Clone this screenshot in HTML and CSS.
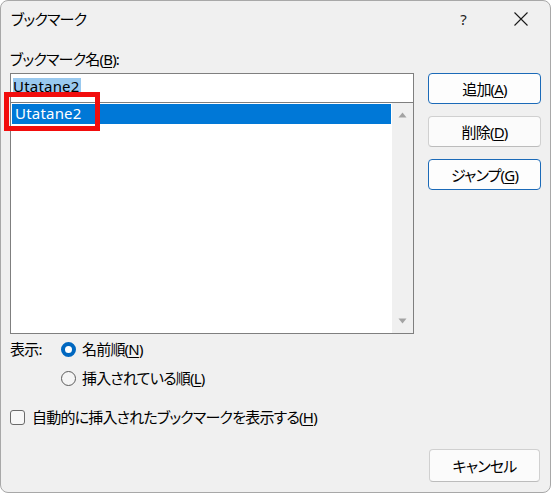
FILE: index.html
```html
<!DOCTYPE html>
<html lang="ja">
<head>
<meta charset="utf-8">
<title>ブックマーク</title>
<link rel="stylesheet" href="styles.css">
</head>
<body>
<div class="window">
  <div class="titlebar">
    <div class="title">ブックマーク</div>
    <div class="tb-btn help">?</div>
    <div class="tb-btn close">
      <svg width="14" height="14" viewBox="0 0 14 14"><path d="M0.5 0.5 L13.5 13.5 M13.5 0.5 L0.5 13.5" stroke="#1a1a1a" stroke-width="1.1" fill="none"/></svg>
    </div>
  </div>
  <div class="content">
    <div class="left">
      <div class="label">ブックマーク名(<u>B</u>):</div>
      <div class="combo">
        <div class="input"><span class="sel">Utatane2</span></div>
        <div class="list">
          <div class="items">
            <div class="item selected">Utatane2</div>
          </div>
          <div class="scrollbar">
            <svg class="arrow" width="9" height="6" viewBox="0 0 9 6"><path d="M4.5 0.5 L8.5 5.5 L0.5 5.5 Z" fill="#a3a3a3"/></svg>
            <svg class="arrow" width="9" height="6" viewBox="0 0 9 6"><path d="M0.5 0.5 L8.5 0.5 L4.5 5.5 Z" fill="#a3a3a3"/></svg>
          </div>
        </div>
      </div>
      <div class="options">
        <div class="opt-label">表示:</div>
        <div class="radio-row first">
          <span class="radio checked"></span>
          <span>名前順(<u>N</u>)</span>
        </div>
        <div class="radio-row second">
          <span class="radio"></span>
          <span>挿入されている順(<u>L</u>)</span>
        </div>
      </div>
      <div class="check-row">
        <span class="checkbox"></span>
        <span>自動的に挿入されたブックマークを表示する(<u>H</u>)</span>
      </div>
    </div>
    <div class="right">
      <div class="btn default">追加(<u>A</u>)</div>
      <div class="btn">削除(<u>D</u>)</div>
      <div class="btn default">ジャンプ(<u>G</u>)</div>
      <div class="btn cancel">キャンセル</div>
    </div>
  </div>
  <div class="annotation"></div>
</div>
</body>
</html>
```

FILE: styles.css
```css
html, body {
  margin: 0;
  padding: 0;
  background: #ffffff;
}
body {
  font-family: "Noto Sans", "Noto Sans CJK JP", sans-serif;
  font-size: 15px;
  font-feature-settings: "palt";
  letter-spacing: -0.8px;
  color: #000;
}
u {
  text-decoration-thickness: 1px;
  text-underline-offset: 2px;
}
.window {
  position: relative;
  box-sizing: border-box;
  width: 551px;
  height: 493px;
  border: 1px solid #a8a8a8;
  border-radius: 8px;
  background: #f0f0f0;
  display: flex;
  flex-direction: column;
  overflow: hidden;
}
.titlebar {
  height: 37px;
  display: flex;
  align-items: center;
  padding-left: 10px;
  flex: none;
}
.title {
  flex: 1;
  line-height: 20px;
  margin-top: -1px;
}
.tb-btn {
  width: 58px;
  height: 37px;
  display: flex;
  align-items: center;
  justify-content: center;
}
.help {
  font-size: 15px;
  color: #222;
  margin-top: -1px;
}
.close svg {
  display: block;
  margin-top: -2px;
}
.content {
  flex: 1;
  display: flex;
  gap: 14px;
  padding: 0 9px 10px 9px;
}
.left {
  width: 404px;
  display: flex;
  flex-direction: column;
}
.label {
  line-height: 20px;
  margin-top: 11px;
}
.combo {
  margin-top: 4px;
  border: 1px solid #7f7f7f;
  background: #fff;
  display: flex;
  flex-direction: column;
}
.input {
  height: 28px;
  box-sizing: border-box;
  padding: 2px 0 0 2px;
}
.sel {
  display: inline-block;
  background: #99c9ef;
  line-height: 17px;
  padding: 0 1px 0 0;
  letter-spacing: 0.2px;
}
.list {
  border-top: 1px solid #7f7f7f;
  height: 230px;
  display: flex;
}
.items {
  flex: 1;
  padding: 1px;
}
.item {
  height: 20px;
  line-height: 19px;
  padding-left: 3px;
  letter-spacing: 0.2px;
}
.item.selected {
  background: #0078d7;
  color: #fff;
}
.scrollbar {
  width: 21px;
  background: #f0f0f0;
  display: flex;
  flex-direction: column;
  justify-content: space-between;
  align-items: center;
  padding: 9px 0 9px 0;
  box-sizing: border-box;
}
.arrow {
  display: block;
}
.options {
  display: grid;
  grid-template-columns: 51px auto;
  margin-top: 5px;
}
.opt-label {
  grid-row: 1;
  grid-column: 1;
  line-height: 20px;
}
.radio-row {
  grid-column: 2;
  display: flex;
  align-items: center;
  gap: 6px;
  line-height: 20px;
}
.radio-row.first {
  grid-row: 1;
}
.radio-row.second {
  grid-row: 2;
  margin-top: 9px;
}
.radio {
  width: 15px;
  height: 15px;
  box-sizing: border-box;
  border-radius: 50%;
  border: 1px solid #5c5c5c;
  background: #f5f5f5;
  flex: none;
}
.radio.checked {
  border: 4.5px solid #0067c0;
  background: #fff;
}
.check-row {
  display: flex;
  align-items: center;
  gap: 7px;
  margin-top: 19px;
  line-height: 20px;
}
.checkbox {
  width: 15px;
  height: 15px;
  box-sizing: border-box;
  border: 1px solid #6a6a6a;
  border-radius: 3px;
  background: #f7f7f7;
  flex: none;
}
.right {
  width: 113px;
  display: flex;
  flex-direction: column;
  padding-top: 35px;
}
.btn {
  box-sizing: border-box;
  height: 31px;
  border: 1px solid #d0d0d0;
  border-bottom-color: #bcbcbc;
  border-radius: 4px;
  background: #fbfbfb;
  display: flex;
  align-items: center;
  justify-content: center;
  line-height: 20px;
  margin-bottom: 12px;
}
.btn.default {
  border: 1px solid #1b6ab8;
  background: #fdfdfd;
}
.btn.cancel {
  margin-top: auto;
  margin-bottom: 0;
  height: 33px;
  margin-left: 1px;
  margin-right: 1px;
}
.annotation {
  position: absolute;
  left: 3px;
  top: 91px;
  width: 96px;
  height: 39px;
  box-sizing: border-box;
  border: 5px solid #f20d0d;
}
```
